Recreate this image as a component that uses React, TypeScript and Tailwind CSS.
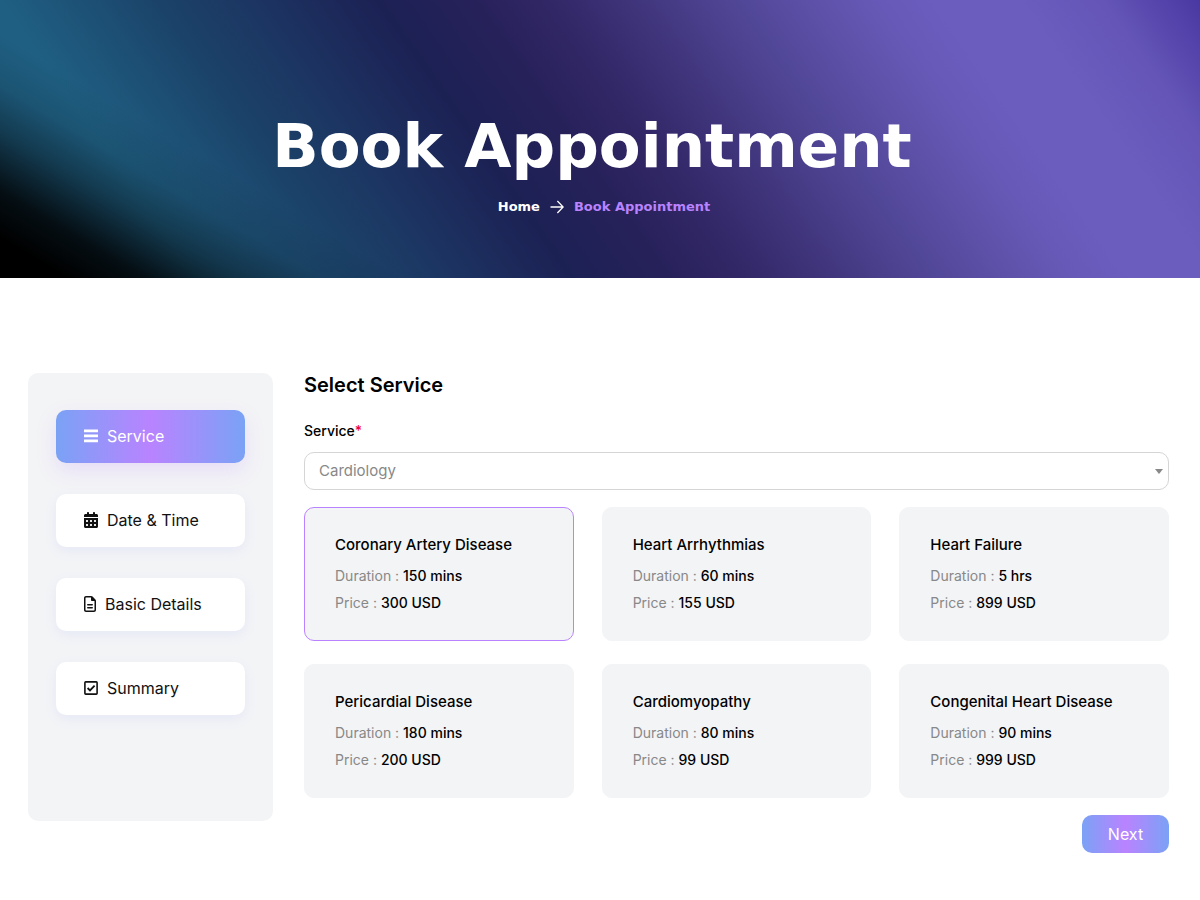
import { useState } from "react";
import { FaRegFileLines, FaCalendarDays } from "react-icons/fa6";

function BarsIcon({ className }: { className?: string }) {
  return (
    <svg viewBox="0 0 14 16" fill="currentColor" className={className}>
      <path d="M0 1.5h14v2.7H0zM0 6.5h14v2.7H0zM0 11.5h14v2.7H0z" />
    </svg>
  );
}

function CheckSquareIcon({ className }: { className?: string }) {
  return (
    <svg viewBox="0 0 14 16" fill="none" stroke="currentColor" strokeWidth="1.6" className={className}>
      <rect x="0.9" y="1.9" width="12.2" height="12.2" rx="0.8" />
      <path d="M3.6 8l2.4 2.4 4.6-4.8" strokeWidth="1.8" />
    </svg>
  );
}

function ArrowIcon() {
  return (
    <svg width="14" height="14" viewBox="0 0 14 14" fill="none" stroke="currentColor" strokeWidth="1.3">
      <path d="M0.5 7h12.6M7.4 1l5.8 6-5.8 6" />
    </svg>
  );
}

const steps = [
  { label: "Service", icon: BarsIcon, size: "h-4 w-3.5" },
  { label: "Date & Time", icon: FaCalendarDays, size: "h-4 w-3.5" },
  { label: "Basic Details", icon: FaRegFileLines, size: "h-4 w-3" },
  { label: "Summary", icon: CheckSquareIcon, size: "h-4 w-3.5" },
];

const services = [
  { name: "Coronary Artery Disease", duration: "150 mins", price: "300 USD" },
  { name: "Heart Arrhythmias", duration: "60 mins", price: "155 USD" },
  { name: "Heart Failure", duration: "5 hrs", price: "899 USD" },
  { name: "Pericardial Disease", duration: "180 mins", price: "200 USD" },
  { name: "Cardiomyopathy", duration: "80 mins", price: "99 USD" },
  { name: "Congenital Heart Disease", duration: "90 mins", price: "999 USD" },
];

function Banner() {
  return (
    <header className="flex flex-col items-center bg-[linear-gradient(31deg,#000_35px,rgba(0,0,0,0.85)_75px,rgba(0,0,0,0.4)_125px,rgba(0,0,0,0.12)_165px,transparent_210px),linear-gradient(55deg,#1f5f82_0%,#1f5f82_14%,#1b4168_26%,#1c3562_32%,#1c2154_41%,#27215a_48%,#332868_54%,#4f4594_66%,#6558b5_76%,#6a5dbe_81%,#6a5dbe_87%,#6455b7_93%,#4a38a2_100%)] pt-[106px] pb-[60px] text-white">
      <h1 className="pr-4 text-center font-['DejaVu_Sans',sans-serif] text-[61px] leading-20 font-bold">
        Book Appointment
      </h1>
      <nav className="mt-2 flex items-center gap-[10px] pt-px pl-2 font-['DejaVu_Sans',sans-serif] text-[13px] leading-[23px] font-bold">
        <a href="/">Home</a>
        <ArrowIcon />
        <span className="text-[#b983ff]">Book Appointment</span>
      </nav>
    </header>
  );
}

function Steps() {
  return (
    <aside className="w-[245px] shrink-0 rounded-[10px] bg-[#f3f4f6] px-7 pt-[37px] pb-[106px]">
      <ul className="flex flex-col gap-[31px]">
        {steps.map(({ label, icon: Icon, size }, i) => (
          <li key={label}>
            <button
              type="button"
              className={
                i === 0
                  ? "flex h-[53px] w-full items-center gap-[9px] rounded-[10px] bg-[linear-gradient(90deg,#7aa2f5,#b983ff_50%,#7aa2f5)] px-7 pb-0.5 text-base text-white shadow-[0_8px_20px_rgba(185,131,255,0.2)]"
                  : "flex h-[53px] w-full items-center gap-[9px] rounded-[10px] bg-white px-7 pb-0.5 text-base text-[#111] shadow-[0_4px_12px_rgba(130,140,255,0.1)]"
              }
            >
              <Icon className={size} />
              {label}
            </button>
          </li>
        ))}
      </ul>
    </aside>
  );
}

export default function App() {
  const [selected, setSelected] = useState("Coronary Artery Disease");

  return (
    <div className="min-h-screen bg-white font-[Inter,sans-serif] text-black">
      <Banner />
      <main className="flex items-start gap-[31px] pt-[95px] pr-[31px] pb-12 pl-7">
        <Steps />
        <section className="min-w-0 flex-1">
          <h2 className="text-xl leading-6 font-semibold">Select Service</h2>
          <label htmlFor="service" className="mt-6 block text-sm leading-5 font-medium">
            Service<span className="text-[#f00040]">*</span>
          </label>
          <div className="relative mt-[11px]">
            <select
              id="service"
              className="h-[38px] w-full appearance-none rounded-[10px] border border-[#d5d5d5] bg-white px-[14px] text-[15px] text-[#888]"
            >
              <option>Cardiology</option>
              <option>Neurology</option>
            </select>
            <span className="pointer-events-none absolute top-[17px] right-[6px] border-x-4 border-t-5 border-x-transparent border-t-[#888]" />
          </div>
          <div className="mt-[17px] grid grid-cols-3 gap-x-7 gap-y-[23px]">
            {services.map((s) => (
              <button
                key={s.name}
                type="button"
                onClick={() => setSelected(s.name)}
                className={
                  s.name === selected
                    ? "rounded-[10px] border border-[#b983ff] bg-[#f3f4f6] px-[30px] pt-[25px] pb-6 text-left text-sm"
                    : "rounded-[10px] border border-[#f3f4f6] bg-[#f3f4f6] px-[30px] pt-[25px] pb-6 text-left text-sm"
                }
              >
                <h3 className="mb-[5px] text-[15px] leading-6 font-medium">{s.name}</h3>
                <p className="leading-[27px] text-[#888]">
                  Duration : <span className="font-medium text-black">{s.duration}</span>
                </p>
                <p className="leading-[27px] text-[#888]">
                  Price : <span className="font-medium text-black">{s.price}</span>
                </p>
              </button>
            ))}
          </div>
          <div className="mt-[17px] flex justify-end">
            <button
              type="button"
              className="h-[38px] w-[87px] rounded-[10px] bg-[linear-gradient(90deg,#7aa2f5,#b983ff_50%,#7aa2f5)] text-base text-white"
            >
              Next
            </button>
          </div>
        </section>
      </main>
    </div>
  );
}
